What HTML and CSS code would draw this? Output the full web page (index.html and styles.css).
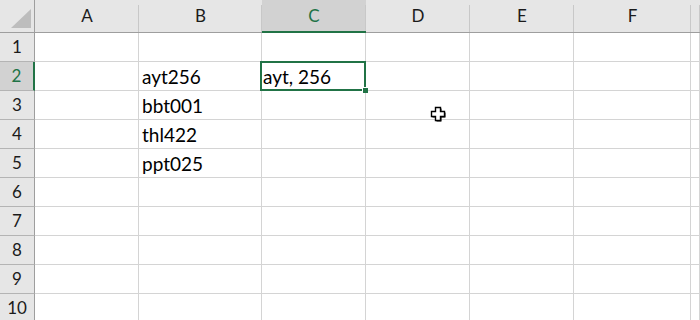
FILE: index.html
```html
<!DOCTYPE html>
<html lang="en">
<head>
  <meta charset="UTF-8" />
  <title>Sheet1</title>
  <link rel="stylesheet" href="styles.css">
</head>
<body>
  <div class="sheet">
    <div class="corner"><span class="tri"></span></div>
    <div class="col">A</div>
    <div class="col">B</div>
    <div class="col active">C</div>
    <div class="col">D</div>
    <div class="col">E</div>
    <div class="col">F</div>
    <div class="col"></div>

    <div class="row">1</div>
    <div class="cell"></div><div class="cell"></div><div class="cell"></div><div class="cell"></div><div class="cell"></div><div class="cell"></div><div class="cell"></div>

    <div class="row active">2</div>
    <div class="cell"></div><div class="cell">ayt256</div>
    <div class="cell edit">ayt, 256<span class="sel"></span><span class="handle"></span></div>
    <div class="cell"></div><div class="cell"></div><div class="cell"></div><div class="cell"></div>

    <div class="row">3</div>
    <div class="cell"></div><div class="cell">bbt001</div><div class="cell"></div><div class="cell"></div><div class="cell"></div><div class="cell"></div><div class="cell"></div>

    <div class="row">4</div>
    <div class="cell"></div><div class="cell">thl422</div><div class="cell"></div><div class="cell"></div><div class="cell"></div><div class="cell"></div><div class="cell"></div>

    <div class="row">5</div>
    <div class="cell"></div><div class="cell">ppt025</div><div class="cell"></div><div class="cell"></div><div class="cell"></div><div class="cell"></div><div class="cell"></div>

    <div class="row">6</div>
    <div class="cell"></div><div class="cell"></div><div class="cell"></div><div class="cell"></div><div class="cell"></div><div class="cell"></div><div class="cell"></div>

    <div class="row">7</div>
    <div class="cell"></div><div class="cell"></div><div class="cell"></div><div class="cell"></div><div class="cell"></div><div class="cell"></div><div class="cell"></div>

    <div class="row">8</div>
    <div class="cell"></div><div class="cell"></div><div class="cell"></div><div class="cell"></div><div class="cell"></div><div class="cell"></div><div class="cell"></div>

    <div class="row">9</div>
    <div class="cell"></div><div class="cell"></div><div class="cell"></div><div class="cell"></div><div class="cell"></div><div class="cell"></div><div class="cell"></div>

    <div class="row">10</div>
    <div class="cell"></div><div class="cell"></div><div class="cell"></div><div class="cell"></div><div class="cell"></div><div class="cell"></div><div class="cell"></div>
  </div>

  <svg class="cursor" width="16" height="16" viewBox="0 0 16 16">
    <path d="M5.5 1.5h5v4h4v5h-4v4h-5v-4h-4v-5h4z" fill="#000" transform="translate(1 1)"/>
    <path d="M5.5 1.5h5v4h4v5h-4v4h-5v-4h-4v-5h4z" fill="#fff" stroke="#000" stroke-width="1.4" stroke-linejoin="miter"/>
  </svg>
</body>
</html>
```

FILE: styles.css
```css
body {
  margin: 0;
  background: #fff;
  font-family: Lato, "Liberation Sans", sans-serif;
  overflow: hidden;
}
.sheet {
  display: grid;
  grid-template-columns: 35px 104px 123px 104px 104px 104px 117px 9px;
  grid-template-rows: 33px repeat(10, 29px);
  width: 700px;
}
.corner,
.col,
.row {
  background: #e6e6e6;
  color: #1b1b1b;
  box-sizing: border-box;
}
.corner {
  border-right: 1px solid #9e9e9e;
  border-bottom: 1px solid #9e9e9e;
  display: flex;
  align-items: flex-end;
  justify-content: flex-end;
  padding: 0 3px 4px 0;
}
.tri {
  width: 20px;
  height: 19px;
  background: #bdbdbd;
  clip-path: polygon(100% 0, 100% 100%, 0 100%);
}
.col {
  position: relative;
  border-bottom: 1px solid #9e9e9e;
  font-size: 17px;
  display: flex;
  justify-content: center;
  align-items: flex-end;
  padding-bottom: 6px;
}
.col::after {
  content: "";
  position: absolute;
  right: 0;
  top: 5px;
  bottom: 0;
  width: 1px;
  background: #c8c8c8;
}
.col.active {
  background: #d2d2d2;
  color: #217346;
  border-bottom: 2px solid #217346;
  padding-bottom: 5px;
}
.row {
  border-right: 1px solid #9e9e9e;
  border-bottom: 1px solid #b4b4b4;
  font-size: 17px;
  display: flex;
  justify-content: center;
  align-items: flex-end;
  padding-bottom: 4px;
}
.row.active {
  background: #d2d2d2;
  color: #217346;
  border-right: 2px solid #217346;
}
.cell {
  position: relative;
  box-sizing: border-box;
  border-right: 1px solid #d4d4d4;
  border-bottom: 1px solid #d4d4d4;
  font-size: 19px;
  color: #000;
  display: flex;
  align-items: flex-end;
  padding: 0 0 2px 3px;
  white-space: nowrap;
}
.cell.edit {
  padding-left: 1px;
}
.sel {
  position: absolute;
  z-index: 1;
  left: -2px;
  top: -1px;
  right: -1px;
  bottom: -1px;
  border: 2px solid #217346;
}
.handle {
  position: absolute;
  z-index: 2;
  right: -3px;
  bottom: -3px;
  width: 5px;
  height: 5px;
  background: #217346;
  border: 1px solid #fff;
  border-width: 1px 0 0 1px;
}
.cursor {
  position: absolute;
  left: 430px;
  top: 106px;
}
```
